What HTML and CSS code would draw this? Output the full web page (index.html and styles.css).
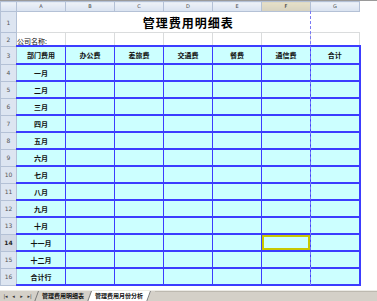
FILE: index.html
```html
<!DOCTYPE html>
<html lang="zh-CN">
<head>
    <meta charset="UTF-8">
    <title>管理费用明细表</title>
    <link rel="stylesheet" href="styles.css">
</head>
<body>
    <div class="sheet-wrap">
        <table class="sheet">
            <colgroup>
                <col class="c-head">
                <col class="c-col"><col class="c-col"><col class="c-col"><col class="c-col">
                <col class="c-col"><col class="c-col"><col class="c-col">
            </colgroup>
            <tr class="r-colhead">
                <th class="corner"></th>
                <th>A</th><th>B</th><th>C</th><th>D</th><th>E</th><th class="cur">F</th><th>G</th>
            </tr>
            <tr class="r-title">
                <th class="rh">1</th>
                <td class="title" colspan="7">管理费用明细表</td>
            </tr>
            <tr class="r-company">
                <th class="rh">2</th>
                <td class="g company">公司名称:</td>
                <td class="g"></td><td class="g"></td><td class="g"></td><td class="g"></td><td class="g"></td><td class="g"></td>
            </tr>
            <tr class="r-top">
                <th class="rh">3</th>
                <td class="d lbl">部门费用</td>
                <td class="d lbl">办公费</td>
                <td class="d lbl">差旅费</td>
                <td class="d lbl">交通费</td>
                <td class="d lbl">餐费</td>
                <td class="d lbl">通信费</td>
                <td class="d lbl">合计</td>
            </tr>
            <tr><th class="rh">4</th><td class="d lbl">一月</td><td class="d"></td><td class="d"></td><td class="d"></td><td class="d"></td><td class="d"></td><td class="d"></td></tr>
            <tr><th class="rh">5</th><td class="d lbl">二月</td><td class="d"></td><td class="d"></td><td class="d"></td><td class="d"></td><td class="d"></td><td class="d"></td></tr>
            <tr><th class="rh">6</th><td class="d lbl">三月</td><td class="d"></td><td class="d"></td><td class="d"></td><td class="d"></td><td class="d"></td><td class="d"></td></tr>
            <tr><th class="rh">7</th><td class="d lbl">四月</td><td class="d"></td><td class="d"></td><td class="d"></td><td class="d"></td><td class="d"></td><td class="d"></td></tr>
            <tr><th class="rh">8</th><td class="d lbl">五月</td><td class="d"></td><td class="d"></td><td class="d"></td><td class="d"></td><td class="d"></td><td class="d"></td></tr>
            <tr><th class="rh">9</th><td class="d lbl">六月</td><td class="d"></td><td class="d"></td><td class="d"></td><td class="d"></td><td class="d"></td><td class="d"></td></tr>
            <tr><th class="rh">10</th><td class="d lbl">七月</td><td class="d"></td><td class="d"></td><td class="d"></td><td class="d"></td><td class="d"></td><td class="d"></td></tr>
            <tr><th class="rh">11</th><td class="d lbl">八月</td><td class="d"></td><td class="d"></td><td class="d"></td><td class="d"></td><td class="d"></td><td class="d"></td></tr>
            <tr><th class="rh">12</th><td class="d lbl">九月</td><td class="d"></td><td class="d"></td><td class="d"></td><td class="d"></td><td class="d"></td><td class="d"></td></tr>
            <tr><th class="rh">13</th><td class="d lbl">十月</td><td class="d"></td><td class="d"></td><td class="d"></td><td class="d"></td><td class="d"></td><td class="d"></td></tr>
            <tr><th class="rh cur">14</th><td class="d lbl">十一月</td><td class="d"></td><td class="d"></td><td class="d"></td><td class="d"></td><td class="d sel"></td><td class="d"></td></tr>
            <tr><th class="rh">15</th><td class="d lbl">十二月</td><td class="d"></td><td class="d"></td><td class="d"></td><td class="d"></td><td class="d"></td><td class="d"></td></tr>
            <tr><th class="rh">16</th><td class="d lbl">合计行</td><td class="d"></td><td class="d"></td><td class="d"></td><td class="d"></td><td class="d"></td><td class="d"></td></tr>
        </table>
        <div class="page-break"></div>
    </div>

    <div class="tabbar">
        <div class="nav">
            <span class="btn">|◂</span><span class="btn">◂</span><span class="btn">▸</span><span class="btn">▸|</span>
        </div>
        <div class="tab">管理费用明细表</div>
        <div class="tab active">管理费用月份分析</div>
        <div class="tab-rest"></div>
    </div>
</body>
</html>
```

FILE: styles.css
```css
body {
    margin: 0;
    background: #fff;
    font-family: "Noto Sans CJK SC", "DejaVu Sans", sans-serif;
    overflow: hidden;
}
.sheet-wrap {
    position: relative;
    height: 290px;
    border-top: 1px solid #9a9a9a;
    box-sizing: border-box;
}
.sheet {
    border-collapse: collapse;
    table-layout: fixed;
    width: 359px;
}
.c-head { width: 16px; }
.c-col { width: 49px; }

.sheet th, .sheet td {
    padding: 0;
    overflow: hidden;
    white-space: nowrap;
}
.r-colhead th {
    height: 9px;
    font: 5px "DejaVu Sans", sans-serif;
    color: #4a4a4a;
    background: linear-gradient(#eef2f8, #d8e2f0);
    border: 1px solid #b4c1d6;
    text-align: center;
    line-height: 9px;
}
.r-colhead th.cur {
    background: linear-gradient(#e6e0c8, #d6d2c0);
    color: #222;
}
.rh {
    font: 6px "DejaVu Sans", sans-serif;
    color: #555;
    background: #dde5f1;
    border: 1px solid #b4c1d6;
    text-align: center;
}
.rh.cur {
    font-weight: bold;
    color: #222;
    background: #d2d9e6;
}
.r-title td { height: 20px; }
.r-company td { height: 12px; }
.r-top td { height: 16px; }
.sheet tr td.d { height: 15px; }
.sheet .r-top td.d { height: 16px; }

.title {
    text-align: center;
    font-weight: bold;
    font-size: 12px;
    letter-spacing: 1px;
    color: #000;
    font-family: "Noto Sans CJK SC", serif;
    border-bottom: 1px solid #dadcdd;
    background: #fff;
}
.g {
    border: 1px solid #dadcdd;
}
.company {
    font-size: 7px;
    color: #111;
    vertical-align: bottom;
    line-height: 8px;
}
.d {
    background: #ccffff;
    border-top: 2px solid #3c3cff;
    border-bottom: 2px solid #3c3cff;
    border-left: 1px solid #3c3cff;
    border-right: 1px solid #3c3cff;
}
.sheet td.d:last-child {
    border-right: 2px solid #3c3cff;
}
.sheet td.d.sel {
    box-shadow: inset 0 0 0 2px #c8c800;
}
.lbl {
    text-align: center;
    font-size: 7px;
    font-weight: bold;
    color: #111;
}
/* dotted page-break marker over the F|G boundary */
.page-break {
    position: absolute;
    left: 310px;
    top: 10px;
    height: 274px;
    border-left: 1px dashed #7a7af5;
}

.tabbar {
    display: flex;
    height: 11px;
    background: #d4d0c8;
    border-top: 1px solid #ecebe6;
    font-size: 6px;
    line-height: 10px;
    color: #111;
}
.nav {
    display: flex;
    width: 34px;
    padding-left: 2px;
    gap: 1px;
}
.btn {
    width: 7px;
    font: 5px "DejaVu Sans", sans-serif;
    line-height: 10px;
    color: #333;
    text-align: center;
}
.tab {
    position: relative;
    padding: 0 6px;
    font-weight: bold;
    z-index: 0;
}
.tab::before {
    content: "";
    position: absolute;
    inset: 0;
    z-index: -1;
    background: #d4d0c8;
    border-left: 1px solid #777;
    border-right: 1px solid #777;
    transform: skewX(-20deg);
}
.tab.active::before {
    background: #fff;
}
.tab.active {
    margin-left: -1px;
}
.tab-rest {
    flex: 1;
    margin-left: 6px;
    border-top: 1px solid #bdb9b0;
}
```
